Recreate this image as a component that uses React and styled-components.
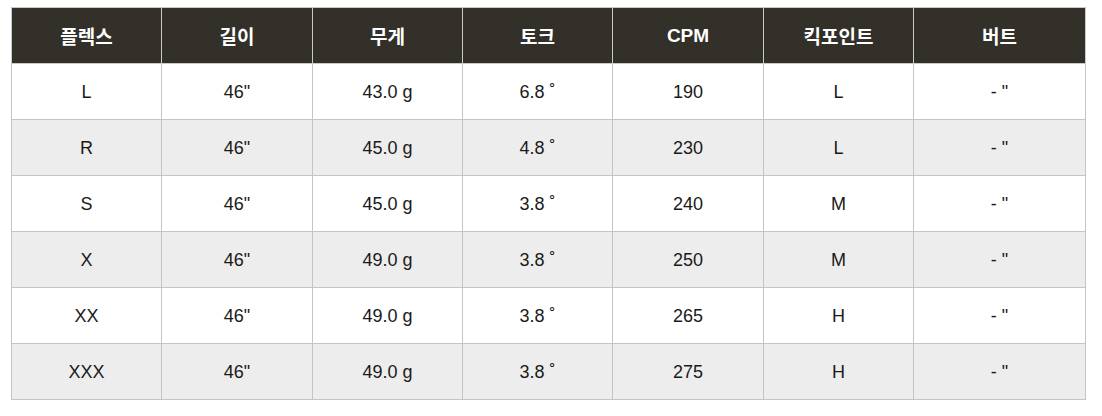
import React from "react";
import styled, { createGlobalStyle } from "styled-components";

const Global = createGlobalStyle`
  html, body {
    margin: 0;
    padding: 0;
    background: #fff;
  }
`;

const Page = styled.div`
  padding: 7px 0 0 11px;
`;

const Table = styled.table`
  width: 1074px;
  border-collapse: collapse;
  table-layout: fixed;
  font-family: "Liberation Sans", "Noto Sans CJK KR", Arial, sans-serif;
`;

const Th = styled.th`
  height: 55px;
  padding: 0;
  background: #33302a;
  color: #fff;
  font-size: 19px;
  font-weight: bold;
  text-align: center;
  border: 1px solid #c9c9c9;
`;

const Td = styled.td`
  height: 55px;
  padding: 0;
  text-align: center;
  font-size: 18px;
  line-height: 20px;
  color: #1a1a1a;
  border: 1px solid #c4c4c4;
  background: ${p => (p.$alt ? "#eeeded" : "#fff")};
`;

const cols = [150, 151, 150, 150, 151, 150, 172];
const heads = ["플렉스", "길이", "무게", "토크", "CPM", "킥포인트", "버트"];
const rows = [
  ["L", '46"', "43.0 g", "6.8 ˚", "190", "L", '- "'],
  ["R", '46"', "45.0 g", "4.8 ˚", "230", "L", '- "'],
  ["S", '46"', "45.0 g", "3.8 ˚", "240", "M", '- "'],
  ["X", '46"', "49.0 g", "3.8 ˚", "250", "M", '- "'],
  ["XX", '46"', "49.0 g", "3.8 ˚", "265", "H", '- "'],
  ["XXX", '46"', "49.0 g", "3.8 ˚", "275", "H", '- "'],
];

export default function App() {
  return (
    <Page>
      <Global />
      <Table>
        <colgroup>
          {cols.map((w, i) => (
            <col key={i} style={{ width: w }} />
          ))}
        </colgroup>
        <thead>
          <tr>
            {heads.map(h => (
              <Th key={h}>{h}</Th>
            ))}
          </tr>
        </thead>
        <tbody>
          {rows.map((r, i) => (
            <tr key={i}>
              {r.map((c, j) => (
                <Td key={j} $alt={i % 2 === 1}>{c}</Td>
              ))}
            </tr>
          ))}
        </tbody>
      </Table>
    </Page>
  );
}
